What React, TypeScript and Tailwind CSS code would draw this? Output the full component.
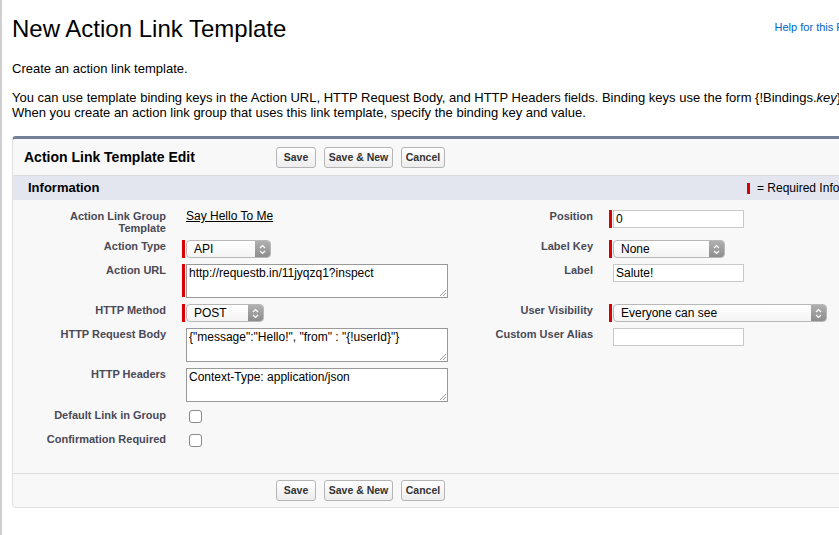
import type { ReactNode } from "react";

const font = { fontFamily: '"Liberation Sans", Arial, sans-serif' };

const Btn = ({ children, w }: { children: ReactNode; w: string }) => (
  <button
    type="button"
    className={`${w} h-[21px] rounded-[3px] border border-[#b5b5b5] bg-gradient-to-b from-white to-[#ededed] text-[10.5px] font-bold text-[#333] leading-none`}
  >
    {children}
  </button>
);

const Buttons = () => (
  <div className="flex gap-[8px]">
    <Btn w="w-[40px]">Save</Btn>
    <Btn w="w-[69px]">Save &amp; New</Btn>
    <Btn w="w-[44px]">Cancel</Btn>
  </div>
);

const Req = ({ tall }: { tall?: boolean }) => (
  <span className={`w-[3px] bg-[#d00] mr-[1px] shrink-0 ${tall ? "h-[33px]" : "h-[18px]"}`} />
);

const Gap = () => <span className="w-[4px] shrink-0" />;

const Label = ({ children }: { children: ReactNode }) => (
  <div className="pr-[1px] text-right text-[11px] leading-[12px] font-bold text-[#4a4a56]">
    {children}
  </div>
);

const Select = ({ value, w }: { value: string; w: string }) => (
  <div
    className={`${w} h-[18px] flex items-stretch rounded-[4px] border border-[#b8b8b8] bg-gradient-to-b from-white to-[#f4f4f4] overflow-hidden`}
  >
    <div className="flex-1 pl-[7px] text-[12px] leading-[16px] text-black">{value}</div>
    <div className="w-[15px] flex items-center justify-center bg-gradient-to-b from-[#b0b0b0] to-[#8d8d8d]">
      <svg width="7" height="11" viewBox="0 0 7 11" fill="none" stroke="white" strokeWidth="1.2">
        <path d="M1 4 L3.5 1.5 L6 4" />
        <path d="M1 7 L3.5 9.5 L6 7" />
      </svg>
    </div>
  </div>
);

const Input = ({ value }: { value?: string }) => (
  <div className="w-[131px] h-[18px] border border-[#c9c9c9] bg-white pl-[2px] text-[12px] leading-[16px] text-black">
    {value}
  </div>
);

const TextArea = ({ value }: { value: string }) => (
  <div className="relative w-[262px] h-[34px] border border-[#9a9a9a] bg-white pl-[2px] pt-[1px] text-[12px] leading-[14px] text-black">
    {value}
    <svg className="absolute right-[1px] bottom-[1px]" width="7" height="7" viewBox="0 0 7 7" stroke="#888" strokeWidth="0.8">
      <path d="M1 7 L7 1 M4 7 L7 4" />
    </svg>
  </div>
);

const Check = () => (
  <div className="ml-[7px] mt-[2px] w-[13px] h-[13px] rounded-[3px] border border-[#8a8a8a] bg-white" />
);

const Val = ({ children }: { children?: ReactNode }) => (
  <div className="pl-[15px] flex items-start">{children}</div>
);

const CheckLabel = ({ children }: { children: ReactNode }) => (
  <div className="h-[18px] pr-[1px] pt-[1px] text-right text-[11px] leading-[12px] font-bold text-[#4a4a56]">
    {children}
  </div>
);

export default function App() {
  return (
    <div className="min-h-[535px] bg-white border-l-2 border-[#cfcfcf] overflow-hidden" style={font}>
      <div className="pl-[10px] pt-[14px]">
        <div className="w-[900px] flex items-start">
          <h1 className="text-[24px] leading-[30px] text-black">New Action Link Template</h1>
          <div className="flex-1" />
          <a className="mr-[50px] mt-[5px] text-[11px] text-[#0063c6] whitespace-nowrap">Help for this Page</a>
        </div>
        <p className="mt-[17px] text-[13px] leading-[15px] text-black">Create an action link template.</p>
        <p className="mt-[14px] text-[13px] leading-[15px] text-black whitespace-nowrap">
          You can use template binding keys in the Action URL, HTTP Request Body, and HTTP Headers fields. Binding keys use the form {"{"}!Bindings.<i>key</i>{"}"}.
          <br />
          When you create an action link group that uses this link template, specify the binding key and value.
        </p>

        <div className="mt-[16px] w-[900px] rounded-[4px] border border-[#e0e0e0] border-t-[3px] border-t-[#747e96] bg-[#f8f8f8]">
          <div className="h-[37px] flex items-center border-b border-[#dcdcdc]">
            <h2 className="w-[263px] pl-[11px] text-[14px] font-bold text-black">Action Link Template Edit</h2>
            <Buttons />
          </div>
          <div className="h-[24px] flex items-center justify-between bg-[#e3e6ef]">
            <h3 className="pl-[15px] text-[13px] font-bold text-black">Information</h3>
            <div className="w-[164px] flex items-center text-[12px] text-black whitespace-nowrap">
              <span className="w-[3px] h-[11px] bg-[#d00] mr-[7px]" />
              = Required Information
            </div>
          </div>

          <div className="pt-[10px] pb-[23px] grid grid-cols-[154px_300px_127px_1fr] gap-y-[6px]">
            <Label>
              Action Link Group
              <br />
              Template
            </Label>
            <Val>
              <span className="pl-[4px] text-[12px] leading-[12px] underline text-black">Say Hello To Me</span>
            </Val>
            <Label>Position</Label>
            <Val>
              <Req />
              <Input value="0" />
            </Val>

            <Label>Action Type</Label>
            <Val>
              <Req />
              <Select value="API" w="w-[85px]" />
            </Val>
            <Label>Label Key</Label>
            <Val>
              <Req />
              <Select value="None" w="w-[112px]" />
            </Val>

            <Label>Action URL</Label>
            <Val>
              <Req tall />
              <TextArea value="http://requestb.in/11jyqzq1?inspect" />
            </Val>
            <Label>Label</Label>
            <Val>
              <Gap />
              <Input value="Salute!" />
            </Val>

            <Label>HTTP Method</Label>
            <Val>
              <Req />
              <Select value="POST" w="w-[78px]" />
            </Val>
            <Label>User Visibility</Label>
            <Val>
              <Req />
              <Select value="Everyone can see" w="w-[214px]" />
            </Val>

            <Label>HTTP Request Body</Label>
            <Val>
              <Gap />
              <TextArea value={'{"message":"Hello!", "from" : "{!userId}"}'} />
            </Val>
            <Label>Custom User Alias</Label>
            <Val>
              <Gap />
              <Input />
            </Val>

            <Label>HTTP Headers</Label>
            <Val>
              <Gap />
              <TextArea value="Context-Type: application/json" />
            </Val>
            <div />
            <div />

            <CheckLabel>Default Link in Group</CheckLabel>
            <Val>
              <Check />
            </Val>
            <div />
            <div />

            <CheckLabel>Confirmation Required</CheckLabel>
            <Val>
              <Check />
            </Val>
            <div />
            <div />
          </div>

          <div className="h-[34px] flex items-center border-t border-[#dcdcdc] pl-[263px]">
            <Buttons />
          </div>
        </div>
      </div>
    </div>
  );
}
